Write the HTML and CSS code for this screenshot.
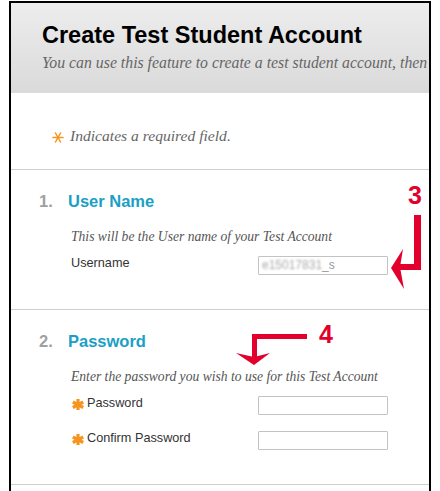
FILE: index.html
```html
<!DOCTYPE html>
<html>
<head>
<meta charset="utf-8">
<link rel="stylesheet" href="styles.css">
</head>
<body>
<div class="frame">
  <div class="page-header">
    <h1 class="title">Create Test Student Account</h1>
    <p class="subtitle">You can use this feature to create a test student account, then</p>
  </div>
  <div class="required-note">
    <svg class="ast-thin" width="12" height="11" viewBox="0 0 12 11"><g stroke="#f7941d" stroke-width="1.5" stroke-linecap="round"><line x1="1" y1="5.5" x2="11" y2="5.5"/><line x1="3.5" y1="1" x2="8.5" y2="10"/><line x1="8.5" y1="1" x2="3.5" y2="10"/></g></svg>
    <span>Indicates a required field.</span>
  </div>
  <div class="step">
    <h2 class="step-title"><span class="step-num">1.</span><span class="step-name">User Name</span></h2>
    <p class="step-desc">This will be the User name of your Test Account</p>
    <div class="field-row">
      <div class="label">Username</div>
      <div class="input"><span class="blurred">e15017831</span><span class="suffix">_s</span></div>
    </div>
  </div>
  <div class="step step-tall">
    <h2 class="step-title"><span class="step-num">2.</span><span class="step-name">Password</span></h2>
    <p class="step-desc">Enter the password you wish to use for this Test Account</p>
    <div class="field-row">
      <div class="label"><svg class="ast" width="12" height="11" viewBox="0 0 12 11"><g stroke="#f7941d" stroke-width="3.2"><line x1="6" y1="0" x2="6" y2="11"/><line x1="0.8" y1="3" x2="11.2" y2="8.5"/><line x1="11.2" y1="3" x2="0.8" y2="8.5"/></g></svg>Password</div>
      <div class="input"></div>
    </div>
    <div class="field-row">
      <div class="label"><svg class="ast" width="12" height="11" viewBox="0 0 12 11"><g stroke="#f7941d" stroke-width="3.2"><line x1="6" y1="0" x2="6" y2="11"/><line x1="0.8" y1="3" x2="11.2" y2="8.5"/><line x1="11.2" y1="3" x2="0.8" y2="8.5"/></g></svg>Confirm Password</div>
      <div class="input"></div>
    </div>
  </div>
</div>

<svg class="annot" width="440" height="491" viewBox="0 0 440 491">
  <g fill="#e2012d">
    <rect x="414" y="215" width="7" height="55"/>
    <rect x="398" y="264" width="23" height="6"/>
    <polygon points="403,249 391,268 404,289 400,267"/>
    <rect x="252" y="334" width="55" height="5"/>
    <rect x="252" y="334" width="5" height="23"/>
    <polygon points="236,353 254,365 270,353 254,357"/>
  </g>
</svg>
<span class="annot-num num3">3</span>
<span class="annot-num num4">4</span>
</body>
</html>
```
FILE: styles.css
```css
html, body {
  margin: 0;
  padding: 0;
  background: #fff;
}
body {
  position: relative;
  width: 440px;
  height: 491px;
  overflow: hidden;
  font-family: "Liberation Sans", Arial, sans-serif;
}
.frame {
  margin: 1px 0 0 9px;
  width: 418px;
  height: 490px;
  border: 2px solid #000;
  border-bottom: none;
  overflow: hidden;
}
.page-header {
  height: 90px;
  box-sizing: border-box;
  padding: 18px 0 0 31px;
  background: linear-gradient(#ededed, #dadada);
  white-space: nowrap;
  overflow: hidden;
}
.title {
  margin: 0;
  font-size: 23.5px;
  line-height: 28px;
  font-weight: bold;
  color: #000;
}
.subtitle {
  margin: 5px 0 0;
  font-family: "Liberation Serif", serif;
  font-style: italic;
  font-size: 15.8px;
  line-height: 18px;
  color: #666;
}
.required-note {
  height: 77px;
  box-sizing: border-box;
  border-bottom: 1px solid #cfcfcf;
  padding: 10px 0 0 41px;
  display: flex;
  align-items: center;
  gap: 6px;
  font-family: "Liberation Serif", serif;
  font-style: italic;
  font-size: 15.6px;
  line-height: 18px;
  color: #666;
}
.ast-thin {
  display: block;
  margin-top: 3px;
}
.step {
  height: 140px;
  box-sizing: border-box;
  border-bottom: 1px solid #cfcfcf;
  padding: 21px 0 0 28px;
}
.step-tall {
  height: 175px;
}
.step-title {
  margin: 0;
  display: flex;
  font-size: 16.5px;
  line-height: 20px;
  font-weight: bold;
}
.step-num {
  width: 29px;
  color: #a0a0a0;
}
.step-name {
  color: #1ba0c5;
}
.step-desc {
  margin: 18px 0 0 32px;
  font-family: "Liberation Serif", serif;
  font-style: italic;
  font-size: 13.6px;
  line-height: 16px;
  color: #555;
}
.field-row {
  margin: 11px 0 0 32px;
  display: grid;
  grid-template-columns: 187px 130px;
  height: 19px;
}
.field-row + .field-row {
  margin-top: 16px;
}
.label {
  display: flex;
  align-items: center;
  gap: 3px;
  font-size: 12.7px;
  line-height: 15px;
  height: 15px;
  color: #333;
}
.ast {
  display: block;
  margin-left: 1px;
  margin-top: 2px;
}
.input {
  box-sizing: border-box;
  height: 19px;
  border: 1px solid #c3c3c3;
  border-radius: 1px;
  padding: 0 0 0 3px;
  font-size: 12px;
  line-height: 17px;
  color: #999;
  white-space: nowrap;
  overflow: hidden;
}
.blurred {
  color: #aaa;
  filter: blur(1.2px);
}
.suffix {
  color: #999;
}
.annot {
  position: absolute;
  left: 0;
  top: 0;
  pointer-events: none;
}
.annot-num {
  position: absolute;
  font-family: "Liberation Sans", Arial, sans-serif;
  font-weight: bold;
  font-size: 25px;
  line-height: 25px;
  color: #e2012d;
}
.num3 {
  left: 408px;
  top: 183px;
}
.num4 {
  left: 319px;
  top: 322px;
}
```
